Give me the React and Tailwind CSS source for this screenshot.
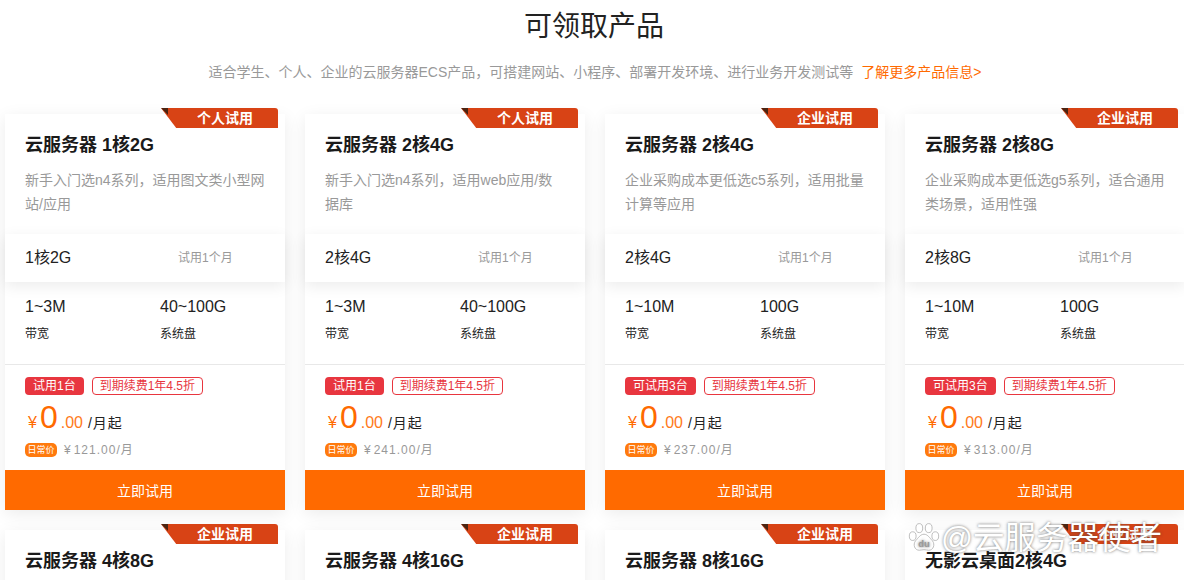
import React from 'react';

const font = '[font-family:"Liberation_Sans","Noto_Sans_CJK_SC",sans-serif]';

const products = [
  { name: '云服务器 1核2G', tag: '个人试用', desc: '新手入门选n4系列，适用图文类小型网站/应用', spec: '1核2G', band: '1~3M', disk: '40~100G', limit: '试用1台', price: '121.00' },
  { name: '云服务器 2核4G', tag: '个人试用', desc: '新手入门选n4系列，适用web应用/数据库', spec: '2核4G', band: '1~3M', disk: '40~100G', limit: '试用1台', price: '241.00' },
  { name: '云服务器 2核4G', tag: '企业试用', desc: '企业采购成本更低选c5系列，适用批量计算等应用', spec: '2核4G', band: '1~10M', disk: '100G', limit: '可试用3台', price: '237.00' },
  { name: '云服务器 2核8G', tag: '企业试用', desc: '企业采购成本更低选g5系列，适合通用类场景，适用性强', spec: '2核8G', band: '1~10M', disk: '100G', limit: '可试用3台', price: '313.00' },
  { name: '云服务器 4核8G', tag: '企业试用' },
  { name: '云服务器 4核16G', tag: '企业试用' },
  { name: '云服务器 8核16G', tag: '企业试用' },
  { name: '无影云桌面2核4G', tag: '企业试用' },
];

const ProductCard = ({ item }) => (
  <div className="relative w-[280px] h-[396px] bg-white shadow-[0_4px_16px_rgba(0,0,0,0.08)]">
    <div className="absolute -top-[6px] left-[156px] w-[117px] h-[20px] bg-[#d84315] rounded-tr-[3px] [clip-path:polygon(0_0,100%_0,100%_100%,13%_100%)] flex items-center justify-end pr-[25px] text-[14px] leading-none font-bold text-white">
      {item.tag}
      <span className="absolute left-0 top-0 w-[7px] h-[7px] bg-[#4a2412] [clip-path:polygon(0_0,100%_0,100%_100%)]"></span>
    </div>
    <div className="h-[120px] px-5 pt-[20px]">
      <h3 className="text-[18px] leading-[22px] font-bold text-[#1a1a1a]">{item.name}</h3>
      <p className="mt-[12px] text-[14px] leading-[24px] text-[#999]">{item.desc}</p>
    </div>
    <div className="h-[48px] flex items-center px-5 bg-white shadow-[0_4px_14px_rgba(0,0,0,0.08)]">
      <span className="w-[153px] text-[16px] text-[#222]">{item.spec}</span>
      <span className="text-[12px] text-[#999]">试用1个月</span>
    </div>
    <div className="h-[83px] flex px-5 pt-[15px] border-b border-[#e8e8e8]">
      <div className="w-[135px]">
        <div className="text-[16px] leading-[20px] text-[#222]">{item.band}</div>
        <div className="mt-[8px] text-[12px] leading-[18px] text-[#222]">带宽</div>
      </div>
      <div>
        <div className="text-[16px] leading-[20px] text-[#222]">{item.disk}</div>
        <div className="mt-[8px] text-[12px] leading-[18px] text-[#222]">系统盘</div>
      </div>
    </div>
    <div className="h-[105px] px-5 pt-[12px]">
      <div className="flex items-center gap-2">
        <span className="h-[18px] px-[8px] rounded-[4px] bg-[#e8363f] text-white text-[12px] leading-[18px]">{item.limit}</span>
        <span className="h-[18px] px-[7px] rounded-[4px] border border-[#e8363f] text-[#e8363f] text-[12px] leading-[16px]">到期续费1年4.5折</span>
      </div>
      <div className="flex items-baseline h-[37px] mt-[4px] pl-[3px] text-[#ff6a00]">
        <span className="text-[16px]">¥</span>
        <span className="ml-[3px] text-[32px] leading-[37px]">0</span>
        <span className="ml-[3px] text-[16px] text-[#ff7a1a]">.00</span>
        <span className="ml-[5px] text-[14px] tracking-[1px] text-[#222]">/月起</span>
      </div>
      <div className="flex items-center mt-[7px]">
        <span className="w-[32px] h-[14px] rounded-[5px] bg-[#ff7a0d] text-white text-[9px] leading-[14px] text-center">日常价</span>
        <span className="ml-[7px] text-[12px] leading-[14px] tracking-[1px] text-[#999]"><span className="mr-[2px]">¥</span>{item.price}/月</span>
      </div>
    </div>
    <div className="h-[40px] bg-[#ff6a00] text-white text-[14px] leading-[42px] text-center">立即试用</div>
  </div>
);

const Watermark = () => (
  <div className="absolute left-[908px] top-[521px] flex items-center text-white text-[31.5px] leading-[34px] [text-shadow:0_0_3px_rgba(70,70,70,0.8)]">
    <svg viewBox="0 0 34 34" className="w-[32px] h-[32px] mr-[1px]">
      <g fill="#fff" stroke="#aaa" strokeWidth="0.8">
        <ellipse cx="5" cy="15" rx="3.6" ry="4.6" />
        <ellipse cx="12" cy="6.5" rx="3.6" ry="4.8" />
        <ellipse cx="22" cy="6.5" rx="3.6" ry="4.8" />
        <ellipse cx="29" cy="15" rx="3.6" ry="4.6" />
        <path d="M17 13c4 0 6 4 9 7 3 4 1 10-4 10-2 0-3-.6-5-.6s-3 .6-5 .6c-5 0-7-6-4-10 3-3 5-7 9-7z" />
      </g>
      <text x="17" y="27" textAnchor="middle" fontSize="10" fontWeight="700" fill="#999" stroke="none">du</text>
    </svg>
    <span>@云服务器使者</span>
  </div>
);

export default function App() {
  return (
    <div className={`relative w-[1184px] h-[580px] overflow-hidden bg-white ${font}`}>
      <h1 className="pt-[7px] pl-[4px] text-[28px] leading-[40px] text-center text-[#222]">可领取产品</h1>
      <p className="mt-[15px] pl-[6px] text-[14px] leading-[20px] text-center text-[#999]">
        适合学生、个人、企业的云服务器ECS产品，可搭建网站、小程序、部署开发环境、进行业务开发测试等
        <span className="ml-[8px] text-[#ff6a00]">了解更多产品信息&gt;</span>
      </p>
      <div className="mt-[32px] ml-[5px] w-[1300px] flex gap-x-[20px]">
        {products.slice(0, 4).map((item, i) => <ProductCard key={i} item={item} />)}
      </div>
      <div className="mt-[20px] ml-[5px] w-[1300px] flex gap-x-[20px]">
        {products.slice(4).map((item, i) => <ProductCard key={i} item={item} />)}
      </div>
      <Watermark />
    </div>
  );
}
